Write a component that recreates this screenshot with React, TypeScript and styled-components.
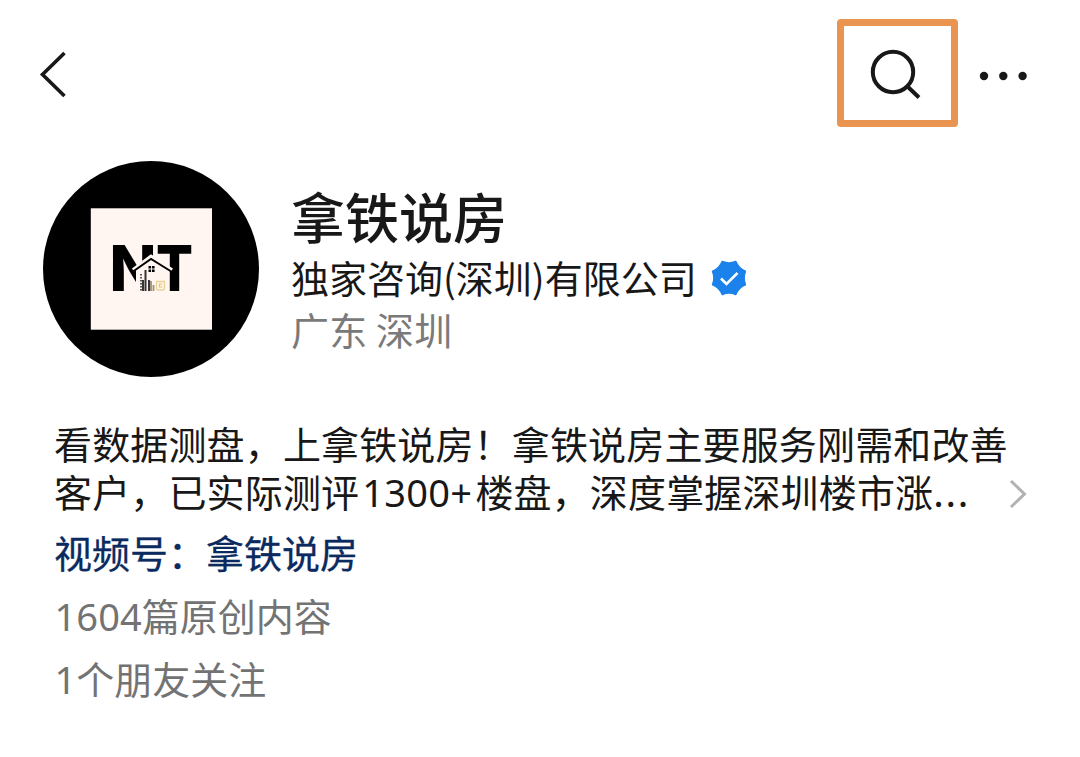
import styled, { createGlobalStyle } from 'styled-components';

interface TextProps {
  muted?: boolean;
}

const GlobalStyle = createGlobalStyle`
  body {
    margin: 0;
    background: #fff;
    font-family: 'Noto Sans CJK SC', sans-serif;
    color: #181818;
  }
`;

const Page = styled.div`
  width: 1080px;
  height: 757px;
  box-sizing: border-box;
  padding: 19px 0 0;
  overflow: hidden;
  background: #fff;
`;

const TopBar = styled.header`
  display: flex;
  align-items: center;
  height: 108px;
  padding: 0 52px 0 38px;
`;

const IconButton = styled.button`
  display: flex;
  padding: 0;
  border: 0;
  background: none;
  color: #181818;
`;

const SearchButton = styled(IconButton)`
  width: 121px;
  height: 108px;
  box-sizing: border-box;
  margin: 0 21px 0 auto;
  border: 7px solid #e99450;
  border-radius: 4px;
`;

const MoreButton = styled(IconButton)`
  padding-top: 6px;
`;

const Profile = styled.section`
  display: flex;
  padding: 34px 0 0 43px;
`;

const Avatar = styled.div`
  display: flex;
  justify-content: center;
  align-items: center;
  width: 216px;
  height: 216px;
  border-radius: 50%;
  background: #000;
`;

const Info = styled.div`
  display: flex;
  flex-direction: column;
  padding: 23px 0 0 32px;
`;

const Name = styled.h1`
  margin: 0;
  font-size: 54px;
  font-weight: 500;
  line-height: 64px;
`;

const Company = styled.div`
  display: flex;
  align-items: center;
  gap: 14px;
  padding-top: 2px;
  font-size: 38px;
  line-height: 54px;
  svg {
    margin-top: 2px;
  }
`;

const Region = styled.div`
  font-size: 38px;
  line-height: 50px;
  letter-spacing: 0.2px;
  color: #7a7a7a;
`;

const About = styled.section`
  display: flex;
  align-items: flex-end;
  justify-content: space-between;
  padding: 42px 52px 0 54px;
`;

const Intro = styled.p`
  margin: 0;
  font-size: 38px;
  letter-spacing: 0.15px;
  line-height: 48px;
  white-space: nowrap;
`;

const Digits = styled.span`
  margin-left: 0.5px;
  font-family: 'Noto Sans', sans-serif;
  line-height: 1;
  letter-spacing: 0.1px;
`;

const Count = styled(Digits)`
  margin: 0 3px 0 3px;
  letter-spacing: 0.3px;
`;

const Dots = styled.span`
  letter-spacing: 1.7px;
`;

const More = styled.div`
  display: flex;
  padding-bottom: 6px;
`;

const Details = styled.section`
  padding: 6px 0 0 54px;
`;

const Channel = styled.a`
  display: block;
  font-size: 38px;
  line-height: 62px;
  color: #0b2a60;
  -webkit-text-stroke: 0.3px #0b2a60;
`;

const Line = styled.div`
  font-size: 38px;
  line-height: 63px;
  color: ${(p: TextProps) => (p.muted ? '#737373' : '#181818')};
`;

const Logo = () => (
  <svg width="122" height="122" viewBox="0 0 122 122">
    <rect x="0.8" y="0.3" width="121.2" height="121.4" fill="#fff6f1" />
    <g fontFamily="Inter, sans-serif" fontWeight="800" fontSize="63">
      <text x="19.5" y="82.5" textLength="47" lengthAdjust="spacingAndGlyphs">N</text>
      <text x="66" y="82.5" textLength="37" lengthAdjust="spacingAndGlyphs">T</text>
    </g>
    <path d="M46 62L61 51L78 61V84H46Z" fill="#fff6f1" />
    <path d="M43 62L61 48.5L82 62" fill="none" stroke="#fff6f1" strokeWidth="3.5" />
    <path d="M43 63.5L61 51L82 64" fill="none" stroke="#000" strokeWidth="1.9" />
    <path d="M58.5 58h2.6v2.6h-2.6zM62 58h2.6v2.6H62zM58.5 61.5h2.6v2.6h-2.6zM62 61.5h2.6v2.6H62z" />
    <path d="M51 66V83" stroke="#222" strokeWidth="1.5" strokeDasharray="1.5 1.5" />
    <path d="M55.5 62V83" stroke="#333" strokeWidth="2" />
    <path d="M53 72V83M59 72V83" stroke="#222" strokeWidth="1.8" />
    <path d="M61 73V83M63.5 77V83" stroke="#a08d75" strokeWidth="1.8" />
    <path d="M66.500 73.500h8v6.500a2 2 0 0 1-2 2h-4a2 2 0 0 1-2-2z" fill="none" stroke="#ead494" strokeWidth="1.3" />
    <path d="M72.5 76h-3v3h3" fill="none" stroke="#e2c56e" strokeWidth="1.2" />
  </svg>
);

const Verified = () => (
  <svg width="36" height="36" viewBox="-18 -18 36 36">
    <path
      d="M-6.7-16.2Q0-13.5 6.7-16.2Q9.5-9.5 16.2-6.7Q13.5 0 16.2 6.7Q9.5 9.5 6.7 16.2Q0 13.5-6.7 16.2Q-9.5 9.5-16.2 6.7Q-13.5 0-16.2-6.7Q-9.5-9.5-6.7-16.2Z"
      fill="#1a82ea"
      stroke="#1a82ea"
      strokeWidth="2"
      strokeLinejoin="round"
    />
    <path d="M-8 0.5L-2.5 6L8.5-5" fill="none" stroke="#fff" strokeWidth="2.6" />
  </svg>
);

const App = () => (
  <Page>
    <GlobalStyle />
    <TopBar>
      <IconButton aria-label="返回">
        <svg width="30" height="50" viewBox="0 0 30 50" fill="none" stroke="currentColor" strokeWidth="3.6">
          <path d="M26.5 5L4.5 26.5L26.5 48" />
        </svg>
      </IconButton>
      <SearchButton aria-label="搜索">
        <svg width="107" height="94" viewBox="0 0 107 94" fill="none" stroke="currentColor" strokeWidth="4">
          <circle cx="49" cy="46" r="20.2" />
          <path d="M63.5 60.5L75 71.5" />
        </svg>
      </SearchButton>
      <MoreButton aria-label="更多">
        <svg width="49" height="10" viewBox="0 0 49 10" fill="currentColor">
          <circle cx="5" cy="5" r="4.2" />
          <circle cx="24.3" cy="5" r="4.2" />
          <circle cx="43.6" cy="5" r="4.2" />
        </svg>
      </MoreButton>
    </TopBar>
    <Profile>
      <Avatar>
        <Logo />
      </Avatar>
      <Info>
        <Name>拿铁说房</Name>
        <Company>
          <span>独家咨询(深圳)有限公司</span>
          <Verified />
        </Company>
        <Region>广东 深圳</Region>
      </Info>
    </Profile>
    <About>
      <Intro>
        看数据测盘，上拿铁说房！拿铁说房主要服务刚需和改善
        <br />
        客户，已实际测评<Count>1300+</Count>楼盘，深度掌握深圳楼市涨<Dots>...</Dots>
      </Intro>
      <More>
        <svg width="20" height="30" viewBox="0 0 20 30" fill="none" stroke="#b2b2b2" strokeWidth="3">
          <path d="M3 2L16.5 15L3 28" />
        </svg>
      </More>
    </About>
    <Details>
      <Channel>视频号：拿铁说房</Channel>
      <Line muted>
        <Digits>1604</Digits>篇原创内容
      </Line>
      <Line muted>
        <Digits>1</Digits>个朋友关注
      </Line>
    </Details>
  </Page>
);

export default App;
